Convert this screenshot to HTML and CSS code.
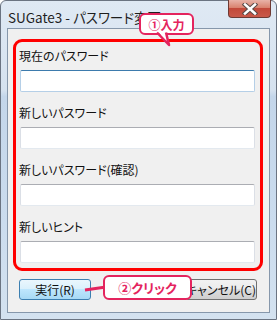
FILE: index.html
```html
<!DOCTYPE html>
<html lang="ja">

<head>
    <meta charset="UTF-8">
    <title>SUGate3 - パスワード変更</title>
    <link rel="stylesheet" href="styles.css">
</head>

<body>
    <div class="window">
        <div class="titlebar">
            <span class="title">SUGate3 - パスワード変更</span>
            <div class="close-btn">
                <svg width="18" height="12" viewBox="0 0 18 12">
                    <path d="M4 1.5 L14 10.5 M14 1.5 L4 10.5" stroke="#5a4a48" stroke-width="4.5" stroke-linecap="square"/>
                    <path d="M4 1.5 L14 10.5 M14 1.5 L4 10.5" stroke="#fff" stroke-width="2.5" stroke-linecap="square"/>
                </svg>
            </div>
        </div>

        <div class="client">
            <div class="group">
                <label class="field-label">現在のパスワード</label>
                <div class="input focused"></div>
                <label class="field-label">新しいパスワード</label>
                <div class="input"></div>
                <label class="field-label">新しいパスワード(確認)</label>
                <div class="input"></div>
                <label class="field-label">新しいヒント</label>
                <div class="input"></div>
            </div>

            <div class="buttons">
                <div class="btn default">実行(R)</div>
                <div class="btn">キャンセル(C)</div>
            </div>
        </div>

        <!-- callouts drawn over the dialog -->
        <svg class="tail" width="277" height="320" viewBox="0 0 277 320">
            <line x1="85" y1="290" x2="106" y2="287" stroke="#e4245e" stroke-width="3"/>
        </svg>
        <div class="callout callout-input">①入力</div>
        <div class="callout callout-click">②クリック</div>
        <svg class="tail" width="277" height="320" viewBox="0 0 277 320">
            <polygon points="157.5,31 166,31 169,45" fill="#fff"/>
            <polyline points="157,32.5 169,45 166,32.5" fill="none" stroke="#e4245e" stroke-width="2.5" stroke-linejoin="round"/>
        </svg>
    </div>
</body>

</html>
```

FILE: styles.css
```css
body {
    margin: 0;
    font-family: "Noto Sans CJK JP", "Liberation Sans", sans-serif;
    font-feature-settings: "palt";
    font-size: 12px;
    color: #111;
    background: #fff;
}

.window {
    position: relative;
    width: 277px;
    height: 320px;
    box-sizing: border-box;
    padding: 0 6px 6px;
    border: 1px solid #6b7482;
    border-radius: 6px 6px 0 0;
    background: linear-gradient(to bottom, #dfe9f4 0, #d6e2ef 28%, #c4d6ea 30%, #cbdcee 70%, #d4e2f0 100%);
    display: flex;
    flex-direction: column;
}

.titlebar {
    height: 27px;
    display: flex;
    align-items: flex-start;
    justify-content: space-between;
}

.title {
    margin-top: 6px;
    margin-left: 1px;
    font-size: 13.5px;
    color: #1e1e1e;
    white-space: nowrap;
}

.close-btn {
    width: 43px;
    height: 18px;
    margin-top: -1px;
    margin-right: -1px;
    box-sizing: border-box;
    border: 1px solid #6e3a34;
    border-top: none;
    border-radius: 0 0 4px 4px;
    background: linear-gradient(to bottom, #e8b3a8 0, #d9826f 45%, #c2493a 50%, #c9594a 100%);
    display: flex;
    align-items: center;
    justify-content: center;
}

.client {
    flex: 1;
    background: #f0f0f0;
    border: 1px solid #8697ab;
    display: flex;
    flex-direction: column;
}

.group {
    margin: 10px 6px 0 5px;
    padding: 5px 5px 5px 4px;
    border: 3px solid #ff0000;
    border-radius: 9px;
    display: flex;
    flex-direction: column;
}

.field-label {
    height: 17px;
    line-height: 17px;
    margin-bottom: 6px;
    margin-left: -1px;
}

.input {
    height: 22px;
    box-sizing: border-box;
    margin-bottom: 12px;
    background: #fff;
    border: 1px solid #dbdfe6;
    border-top-color: #abadb3;
    border-bottom-color: #e3e9ef;
    border-radius: 2px;
}

.input:last-child {
    margin-bottom: 0;
}

.input.focused {
    border-color: #b5cfe7;
    border-top-color: #3d7bad;
}

.buttons {
    margin-top: 8px;
    padding: 0 12px 0 11px;
    display: flex;
    justify-content: space-between;
}

.btn {
    width: 72px;
    height: 21px;
    box-sizing: border-box;
    border: 1px solid #707070;
    border-radius: 3px;
    background: linear-gradient(to bottom, #f2f2f2 0, #ebebeb 50%, #dddddd 50%, #cfcfcf 100%);
    display: flex;
    align-items: center;
    justify-content: center;
    font-size: 12px;
    white-space: nowrap;
}

.btn.default {
    border-color: #3c7fb1;
    background: linear-gradient(to bottom, #eaf6fd 0, #d9f0fc 50%, #bee6fd 50%, #a7d9f5 100%);
}

.callout {
    position: absolute;
    box-sizing: border-box;
    border: 2.5px solid #e4245e;
    border-radius: 6px;
    background: #fff;
    color: #e4245e;
    font-weight: bold;
    display: flex;
    align-items: center;
    justify-content: center;
    white-space: nowrap;
}

.callout-input {
    left: 138px;
    top: 12px;
    width: 55px;
    height: 22px;
    font-size: 12px;
}

.callout-click {
    left: 102px;
    top: 274px;
    width: 89px;
    height: 25px;
    font-size: 13px;
}

.tail {
    position: absolute;
    left: -1px;
    top: -1px;
}
```
